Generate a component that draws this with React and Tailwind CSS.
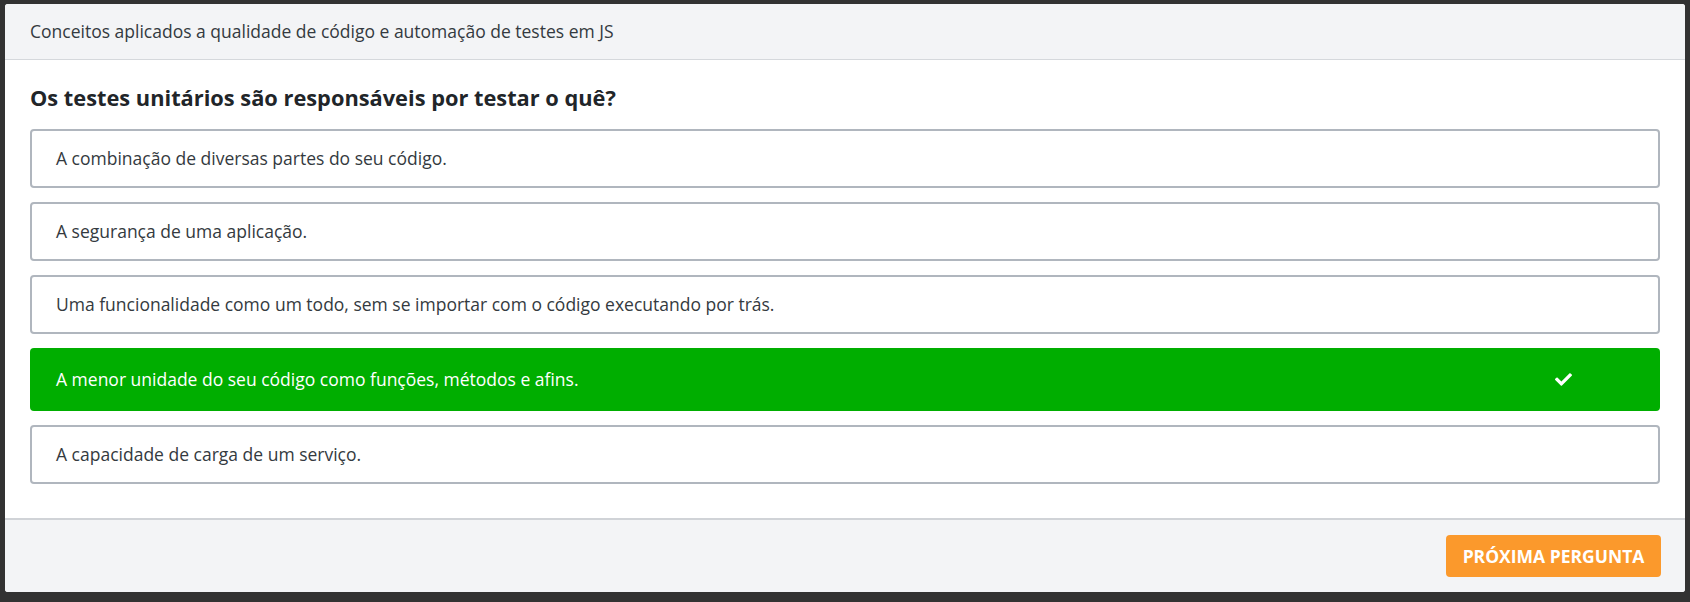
import React from 'react';

const options = [
  { id: 1, text: 'A combinação de diversas partes do seu código.' },
  { id: 2, text: 'A segurança de uma aplicação.' },
  { id: 3, text: 'Uma funcionalidade como um todo, sem se importar com o código executando por trás.' },
  { id: 4, text: 'A menor unidade do seu código como funções, métodos e afins.', correct: true },
  { id: 5, text: 'A capacidade de carga de um serviço.' },
];

const Check = () => (
  <svg viewBox="0 0 512 512" className="w-[17px] h-[17px]" fill="currentColor">
    <path d="M173.9 439.4 7.5 273c-10-10-10-26.2 0-36.2l36.2-36.2c10-10 26.2-10 36.2 0L192 312.7 432.1 72.6c10-10 26.2-10 36.2 0l36.2 36.2c10 10 10 26.2 0 36.2L210.1 439.4c-10 10-26.2 10-36.2 0z" />
  </svg>
);

export default function App() {
  return (
    <div className="w-[1690px] h-[602px] bg-[#323232] pt-[4px] pl-[5px] pr-[5px] pb-[10px] font-['Open_Sans',sans-serif]">
      <div className="h-full bg-white rounded-[3px] overflow-hidden flex flex-col">
        {/* Header */}
        <div className="h-[56px] bg-[#f3f4f6] border-b border-[#d5d8dc] px-[25px] flex items-center">
          <span className="text-[17.5px] text-[#343a40]">Conceitos aplicados a qualidade de código e automação de testes em JS</span>
        </div>

        {/* Body */}
        <div className="flex-1 px-[25px] pt-[22px]">
          <h2 className="text-[21.8px] leading-[31px] font-bold text-[#212529] mb-[16px]">
            Os testes unitários são responsáveis por testar o quê?
          </h2>
          <div className="flex flex-col gap-[14px]">
            {options.map(o =>
              o.correct ? (
                <div key={o.id} className="h-[63px] rounded-[4px] bg-[#00ae00] text-white flex items-center justify-between pl-[26px] pr-[88px]">
                  <span className="text-[17.5px]">{o.text}</span>
                  <Check />
                </div>
              ) : (
                <div key={o.id} className="h-[59px] rounded-[4px] border-2 border-[#b0b6be] flex items-center pl-[24px]">
                  <span className="text-[17.5px] text-[#343a40]">{o.text}</span>
                </div>
              )
            )}
          </div>
        </div>

        {/* Footer */}
        <div className="h-[74px] bg-[#f3f4f6] border-t-2 border-[#d0d3d7] flex items-start justify-end pt-[15px] pr-[24px]">
          <button className="h-[42px] w-[215px] rounded-[4px] bg-[#fb992c] text-white font-bold text-[17.5px] uppercase">
            Próxima pergunta
          </button>
        </div>
      </div>
    </div>
  );
}
